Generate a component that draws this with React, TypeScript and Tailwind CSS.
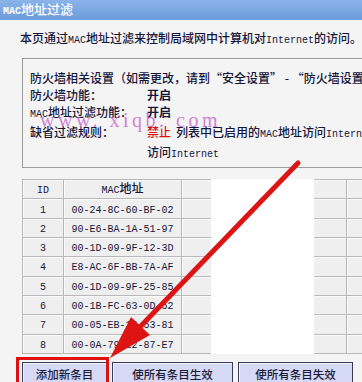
const rows = [
  ["1", "00-24-8C-60-BF-02"],
  ["2", "90-E6-BA-1A-51-97"],
  ["3", "00-1D-09-9F-12-3D"],
  ["4", "E8-AC-6F-BB-7A-AF"],
  ["5", "00-1D-09-9F-25-85"],
  ["6", "00-1B-FC-63-0D-52"],
  ["7", "00-05-EB-15-53-81"],
  ["8", "00-0A-79-E2-87-E7"],
];

function En({ children }: { children: React.ReactNode }) {
  return <span className="font-['Liberation_Mono',monospace] text-[10px]">{children}</span>;
}

function Cell({ w, children }: { w: string; children?: React.ReactNode }) {
  return (
    <div
      className={`${w} shrink-0 h-full flex items-center justify-center border-r border-b border-[#b8b8b8] bg-[#efefef] shadow-[inset_1px_1px_0_#fafafa]`}
    >
      <span>{children}</span>
    </div>
  );
}

export default function App() {
  return (
    <div className="relative w-[362px] h-[382px] overflow-hidden bg-[#f4f4f4] font-['Noto_Sans_CJK_SC',sans-serif] font-medium text-[12px] leading-[17px] text-[#16163a]">
      {/* title bar */}
      <div className="h-[20px] bg-gradient-to-b from-[#8ab3ea] to-[#6d9bda] text-white pl-[3px] flex items-center">
        <span className="text-[13px]">
          <span className="font-['Liberation_Mono',monospace] text-[10px] font-bold">MAC</span>地址过滤
        </span>
      </div>

      <div className="mt-[9px] pl-[20px] h-[17px] whitespace-nowrap">
        本页通过<En>MAC</En>地址过滤来控制局域网中计算机对<En>Internet</En>的访问。
      </div>

      {/* firewall panel */}
      <div className="mt-[12px] ml-[22px] w-[380px] h-[110px] border border-[#9c9c9c] pl-[7px] pt-[10px] whitespace-nowrap">
        <div>防火墙相关设置（如需更改，请到“安全设置” - “防火墙设置”）</div>
        <div className="flex">
          <div className="w-[117px]">防火墙功能：</div>
          <div className="font-bold">开启</div>
        </div>
        <div className="flex">
          <div className="w-[117px]">
            <En>MAC</En>地址过滤功能：
          </div>
          <div className="font-bold">开启</div>
        </div>
        <div className="flex">
          <div className="w-[117px]">缺省过滤规则：</div>
          <div>
            <span className="text-[#e01010]">禁止</span>
            <span className="ml-[5px]">
              列表中已启用的<En>MAC</En>地址访问<En>Internet</En>
            </span>
          </div>
        </div>
        <div className="flex">
          <div className="w-[117px]" />
          <div>
            访问<En>Internet</En>
          </div>
        </div>
      </div>

      {/* table */}
      <div className="relative mt-[11px] ml-[22px] w-[400px] border-l border-t border-[#b8b8b8]">
        <div className="flex h-[19.33px]">
          <Cell w="w-[41px]">
            <En>ID</En>
          </Cell>
          <Cell w="w-[118px]">
            <En>MAC</En>地址
          </Cell>
          <Cell w="w-[165px]" />
          <Cell w="w-[76px]" />
        </div>
        {rows.map(([id, mac]) => (
          <div key={id} className="flex h-[19.33px]">
            <Cell w="w-[41px]">
              <En>{id}</En>
            </Cell>
            <Cell w="w-[118px]">
              <En>{mac}</En>
            </Cell>
            <Cell w="w-[165px]" />
            <Cell w="w-[76px]" />
          </div>
        ))}
        <div className="absolute left-[188px] top-[-1px] bottom-0 w-[103px] bg-white" />
      </div>

      {/* buttons */}
      <div className="mt-[8px] ml-[22px] flex gap-[5px]">
        {[
          ["添加新条目", "w-[85px]"],
          ["使所有条目生效", "w-[121px]"],
          ["使所有条目失效", "w-[115px]"],
        ].map(([label, w]) => (
          <div
            key={label}
            className={`${w} h-[24px] flex items-start justify-center pt-[3px] border border-[#3a3a58] bg-[#d5d9f5] shadow-[inset_1px_1px_0_#f2f3ff] text-[11.5px] text-[#1c1c38]`}
          >
            {label}
          </div>
        ))}
      </div>

      {/* watermark */}
      <div className="absolute left-[40px] top-[110px] font-['Liberation_Serif',serif] font-normal text-[20px] leading-[20px] text-[#c45ccc] opacity-75 tracking-[3.5px] whitespace-nowrap">
        www. xiqb. com
      </div>

      {/* red highlight + arrow */}
      <div className="absolute left-[16px] top-[357px] w-[93px] h-[40px] border-[3px] border-[#e01010]" />
      <svg className="absolute inset-0 pointer-events-none" width="362" height="382" viewBox="0 0 362 382">
        <line x1="298" y1="163" x2="138" y2="329" stroke="#dc1414" strokeWidth="5" strokeLinecap="round" />
        <polygon points="110,358 131,317 150,335" fill="#dc1414" />
      </svg>
    </div>
  );
}
